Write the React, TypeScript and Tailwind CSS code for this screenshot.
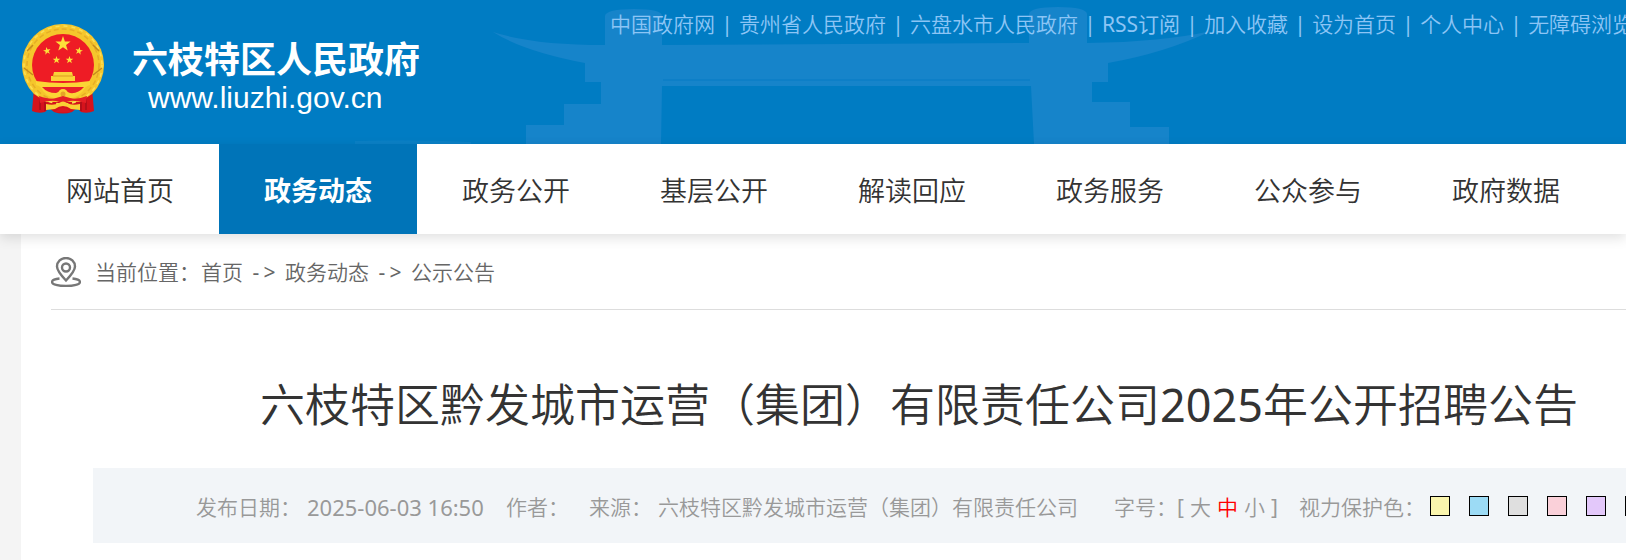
const topLinks = [
  "中国政府网",
  "贵州省人民政府",
  "六盘水市人民政府",
  "RSS订阅",
  "加入收藏",
  "设为首页",
  "个人中心",
  "无障碍浏览",
];

const navItems = [
  "网站首页",
  "政务动态",
  "政务公开",
  "基层公开",
  "解读回应",
  "政务服务",
  "公众参与",
  "政府数据",
];

const crumbs = ["首页", "政务动态", "公示公告"];

const swatches = [
  { name: "黄色", color: "bg-[#faf5ad]" },
  { name: "蓝色", color: "bg-[#9cdbf5]" },
  { name: "灰色", color: "bg-[#dfdfdf]" },
  { name: "粉色", color: "bg-[#fad0d9]" },
  { name: "紫色", color: "bg-[#e3c8fa]" },
  { name: "白色", color: "bg-white" },
];

const STAR = "M0-10 2.4-3.2 9.5-3.1 3.8 1.2 5.9 8.1 0 4-5.9 8.1-3.8 1.2-9.5-3.1-2.4-3.2z";

function Emblem() {
  return (
    <svg className="h-[90px] w-[82px] shrink-0" viewBox="0 0 82 90" aria-hidden="true">
      <path d="M12 64 10 87q6 3 13 1l4-4 5 4q9 3 18 0l5-4 4 4q7 2 13-1L70 64z" fill="#d5131c" />
      <path d="M18 72v14M23 73v14M59 73v14M64 72v14" stroke="#a90f1a" strokeWidth="1.5" />
      <path d="M12 70A41 41 0 1 1 70 70L58 78H24z" fill="#f5c62c" />
      <circle cx="41" cy="41" r="36" fill="none" stroke="#e6ad26" strokeWidth="1.5" strokeDasharray="5 3" />
      <circle cx="41" cy="41" r="39" fill="none" stroke="#fbdf55" strokeWidth="1.5" strokeDasharray="4 4" />
      <path d="m2 44 9 7M80 44l-9 7M5 27l6-6M77 27l-6-6" stroke="#c58a1d" strokeWidth="1.5" />
      <circle cx="41" cy="41" r="31" fill="#ee1c25" />
      <g fill="#fde03a">
        <path d={STAR} transform="translate(41 20) scale(.8)" />
        <path d={STAR} transform="translate(25 27) rotate(-12) scale(.4)" />
        <path d={STAR} transform="translate(57 27) rotate(12) scale(.4)" />
        <path d={STAR} transform="translate(34.500 36) scale(.4)" />
        <path d={STAR} transform="translate(47.500 36) scale(.4)" />
      </g>
      <path d="M32 48h18l1 4h2v5H29v-5h2z" fill="#fad238" />
      <path d="M31 52h20" stroke="#dc9b20" />
      <path d="M14 57q27 4 54 0v4q-5 1-7 6-6 8-20 8t-20-8q-2-5-7-6z" fill="#fbd535" />
      <path d="M20 63h42q-6 7-14 6l-7-3-7 3q-9 0-14-6z" fill="#e8202a" />
      <circle cx="41" cy="70" r="5" fill="#fbd535" />
      <circle cx="41" cy="70" r="2.500" fill="#e5a427" />
      <path d="M17 72q12 4 17 2l7-2 7 2q7 2 17-2l-1 7q-12-3-16-2l-7 2-7-2q-6-1-16 2z" fill="#e41e26" />
      <path d="M24 80q8 2 13-1 4-3 8 0 5 3 13 1v6l-9-1q-8-6-16 0l-9 1z" fill="#fad034" />
      <path d="M33 88q8-8 16 0z" fill="#d91821" />
    </svg>
  );
}

// Pale gate silhouette behind the header
function GateBackdrop() {
  return (
    <svg className="absolute inset-y-0 left-0 h-[144px] w-[1240px] max-w-none" viewBox="0 0 1240 144" aria-hidden="true">
      <g fill="#1684ca">
        <path d="M605 45V16q1-7 29-7 28 0 28 7V45L1029 43V14q1-7 29-7 28 0 29 7v29q76-1 124-12-46 22-103 32v19h-16v20h38v25h39v17H1034L1031 86H662l-1 58H526v-19h38v-21h37V82h-16V63q-62-12-92-31 40 13 112 13z" />
        <path d="M355 144v-3q60-2 116 1v2zM1181 144q20-2 50 0z" opacity=".5" />
      </g>
      <path d="M663 80h367" stroke="#0b7ec6" strokeWidth="1.500" />
    </svg>
  );
}

function PinIcon() {
  return (
    <svg className="h-[30px] w-[30px] shrink-0" viewBox="0 0 30 30" fill="none" stroke="#777" strokeWidth="2.400" aria-hidden="true">
      <path d="M15 23.500Q6 14 6 9.500a9 8.500 0 0 1 18 0Q24 14 15 23.500z" />
      <circle cx="15" cy="10.500" r="4" />
      <path d="M8.500 21.500C4 22 1 23 1 25c0 2.500 6 4 14 4s14-1.500 14-4c0-2-3-3-7.500-3.500" />
    </svg>
  );
}

export default function App() {
  return (
    <div className="min-h-screen overflow-hidden whitespace-nowrap bg-[#f4f4f4] font-['Noto_Sans','Noto_Sans_CJK_SC',sans-serif] font-[350] text-[#666]">
      <header className="relative flex h-[144px] bg-[#007cc3]">
        <GateBackdrop />
        <a href="#" className="relative ml-[22px] flex w-[588px] shrink-0 items-start gap-[28px] pt-6 text-white">
          <Emblem />
          <span className="flex flex-col pt-[14px]">
            <span className="text-[36px] leading-[44px] font-bold">六枝特区人民政府</span>
            <span className="pl-4 font-['Liberation_Sans',sans-serif] text-[30px] leading-8 font-normal">www.liuzhi.gov.cn</span>
          </span>
        </a>
        <ul className="relative flex h-[50px] items-center text-[21px] text-[#8cc5f5]">
          {topLinks.map((link, i) => (
            <li key={link} className="flex shrink-0">
              {i > 0 && <span className="w-6 text-center font-normal">|</span>}
              <a href="#" className={link.startsWith("RSS") ? "font-normal" : ""}>{link}</a>
            </li>
          ))}
        </ul>
      </header>

      <nav className="relative flex h-[90px] bg-white pl-[21px] shadow-[0_4px_12px_rgba(0,0,0,0.12)]">
        {navItems.map((item) => (
          <a
            key={item}
            href="#"
            className={`flex w-[198px] shrink-0 items-center justify-center pt-1 text-[27px] ${
              item === "政务动态" ? "bg-[#0074b8] font-bold text-white" : "text-[#333]"
            }`}
          >
            {item}
          </a>
        ))}
      </nav>

      <main className="ml-[21px] min-h-[326px] bg-white pl-[30px]">
        <div className="flex h-[76px] items-center border-b border-[#ddd] text-[21px]">
          <PinIcon />
          <span className="ml-[14px] w-[106px] pt-[2px]">当前位置：</span>
          {crumbs.map((crumb, i) => (
            <span key={crumb} className="flex pt-[2px]">
              {i > 0 && (
                <span className="flex w-[42px] justify-center gap-1 font-normal">
                  <span>-</span>
                  <span>&gt;</span>
                </span>
              )}
              <a href="#">{crumb}</a>
            </span>
          ))}
        </div>

        <h1 className="ml-[209px] mt-[60px] text-[45px] leading-[70px] text-[#333]">
          六枝特区黔发城市运营（集团）有限责任公司<span className="font-normal">2025</span>年公开招聘公告
        </h1>

        <div className="ml-[42px] mt-7 flex h-[75px] items-center bg-[#f2f5f8] pl-[103px] pt-1 text-[21px] text-[#999]">
          <span className="w-[111px] shrink-0">发布日期：</span>
          <span className="w-[199px] shrink-0 text-[22px] font-normal">2025-06-03 16:50</span>
          <span className="w-[83px] shrink-0">作者：</span>
          <span className="w-[69px] shrink-0">来源：</span>
          <span className="w-[456px] shrink-0">六枝特区黔发城市运营（集团）有限责任公司</span>
          <span className="w-[63px] shrink-0">字号：</span>
          <span className="flex w-[122px] shrink-0 gap-[6px]">
            <span className="font-normal">[</span>
            <button type="button">大</button>
            <button type="button" className="text-[#f00]">中</button>
            <button type="button">小</button>
            <span className="font-normal">]</span>
          </span>
          <span className="w-[131px] shrink-0">视力保护色：</span>
          <span className="flex shrink-0 gap-[19px] pb-1">
            {swatches.map((swatch) => (
              <button
                key={swatch.name}
                type="button"
                aria-label={swatch.name}
                className={`size-5 shrink-0 border border-black ${swatch.color}`}
              />
            ))}
          </span>
        </div>
      </main>
    </div>
  );
}
